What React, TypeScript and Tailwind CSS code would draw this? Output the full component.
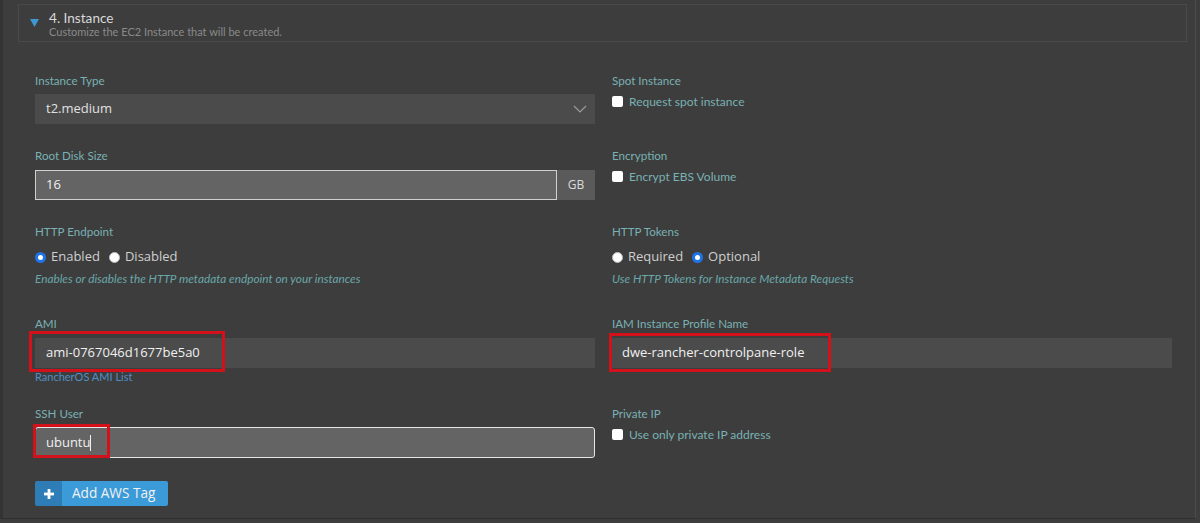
import React from "react";

const Label = ({ children }: { children: React.ReactNode }) => (
  <div className="text-[11.6px] leading-[14px] text-[#79b1b4] h-[14px]">{children}</div>
);

const Help = ({ children }: { children: React.ReactNode }) => (
  <div className="text-[11.8px] leading-[13px] italic text-[#6aa7a9] mt-[5px]">{children}</div>
);

const Radio = ({ checked, label }: { checked?: boolean; label: string }) => (
  <span className="inline-flex items-center gap-[5px] mr-[9px]">
    {checked ? (
      <span className="w-[11px] h-[11px] rounded-full border-[3px] border-[#1e74e6] bg-white box-border" />
    ) : (
      <span className="w-[11px] h-[11px] rounded-full bg-white border border-[#bbb] box-border" />
    )}
    <span className="text-[13px] text-[#cfcfcf] font-['Open_Sans',sans-serif]">{label}</span>
  </span>
);

const Checkbox = ({ label }: { label: string }) => (
  <div className="flex items-start gap-[6px] mt-[7px]">
    <span className="w-[11px] h-[11px] bg-white rounded-[2px] mt-[1px]" />
    <span className="text-[12px] leading-[14px] text-[#79b1b4]">{label}</span>
  </div>
);

export default function App() {
  return (
    <div className="w-[1200px] h-[523px] bg-[#3d3d3d] font-['Lato',sans-serif] overflow-hidden">
      <div className="h-[519px] border-l-[3px] border-r border-b border-l-[#333] border-r-[#4c4c4c] border-b-[#2f2f2f] mr-[4px]">
        {/* header */}
        <div className="ml-[15px] mr-[8px] pt-[4px]">
          <div className="h-[38px] border border-[#4a4a4a] flex items-start">
            <div className="pl-[11px] pt-[14px]">
              <svg width="9" height="8" viewBox="0 0 9 8">
                <polygon points="0,0 9,0 4.5,8" fill="#3d98d3" />
              </svg>
            </div>
            <div className="pl-[10px] pt-[5px]">
              <div className="text-[13.6px] leading-[16px] text-[#d8d8d8]">4. Instance</div>
              <div className="text-[11px] leading-[12px] text-[#8a8a8a]">Customize the EC2 Instance that will be created.</div>
            </div>
          </div>
        </div>

        <div className="pl-[32px] pr-[24px] pt-[32px]">
          <div className="grid grid-cols-[560px_560px] gap-x-[17px]">
            {/* Row 1 */}
            <div className="h-[75px]">
              <Label>Instance Type</Label>
              <div className="mt-[6px] h-[30px] bg-[#4b4b4b] flex items-center justify-between px-[11px]">
                <span className="text-[13px] text-[#e0e0e0] font-['Open_Sans',sans-serif]">t2.medium</span>
                <svg width="14" height="8" viewBox="0 0 14 8" className="mr-[-3px]">
                  <polyline points="1,1 7,7 13,1" fill="none" stroke="#9a9a9a" strokeWidth="1.2" />
                </svg>
              </div>
            </div>
            <div className="h-[75px]">
              <Label>Spot Instance</Label>
              <Checkbox label="Request spot instance" />
            </div>

            {/* Row 2 */}
            <div className="h-[76px]">
              <Label>Root Disk Size</Label>
              <div className="mt-[7px] h-[30px] flex">
                <div className="flex-1 bg-[#646464] border border-[#d0d0d0] flex items-center px-[10px]">
                  <span className="text-[13px] text-[#f0f0f0] font-['Open_Sans',sans-serif]">16</span>
                </div>
                <div className="w-[38px] bg-[#5a5a5a] flex items-center justify-center text-[12px] text-[#dcdcdc] font-['Open_Sans',sans-serif]">GB</div>
              </div>
            </div>
            <div className="h-[76px]">
              <Label>Encryption</Label>
              <Checkbox label="Encrypt EBS Volume" />
            </div>

            {/* Row 3 */}
            <div className="h-[92px]">
              <Label>HTTP Endpoint</Label>
              <div className="mt-[8px] flex items-center h-[20px]">
                <Radio checked label="Enabled" />
                <Radio label="Disabled" />
              </div>
              <Help>Enables or disables the HTTP metadata endpoint on your instances</Help>
            </div>
            <div className="h-[92px]">
              <Label>HTTP Tokens</Label>
              <div className="mt-[8px] flex items-center h-[20px]">
                <Radio label="Required" />
                <Radio checked label="Optional" />
              </div>
              <Help>Use HTTP Tokens for Instance Metadata Requests</Help>
            </div>

            {/* Row 4 */}
            <div className="h-[90px]">
              <Label>AMI</Label>
              <div className="relative mt-[7px] h-[30px] bg-[#4b4b4b] flex items-center px-[11px]">
                <span className="text-[13px] text-[#f0f0f0] font-['Open_Sans',sans-serif]">ami-0767046d1677be5a0</span>
                <div className="absolute left-[-6px] top-[-7px] w-[196px] h-[41px] border-[3px] border-[#d3111b]" />
              </div>
              <div className="text-[11px] leading-[13px] text-[#4f8fc4] mt-[2px]">RancherOS AMI List</div>
            </div>
            <div className="h-[90px]">
              <Label>IAM Instance Profile Name</Label>
              <div className="relative mt-[7px] h-[30px] bg-[#4b4b4b] flex items-center px-[10px]">
                <span className="text-[13px] text-[#f0f0f0] font-['Open_Sans',sans-serif]">dwe-rancher-controlpane-role</span>
                <div className="absolute left-[-3px] top-[-5px] w-[222px] h-[39px] border-[3px] border-[#d3111b]" />
              </div>
            </div>

            {/* Row 5 */}
            <div className="h-[74px]">
              <Label>SSH User</Label>
              <div className="relative mt-[6px] h-[31px] bg-[#646464] border border-[#e6e6e6] rounded-[3px] flex items-center px-[10px]">
                <span className="text-[13px] text-[#f0f0f0] font-['Open_Sans',sans-serif]">ubuntu</span>
                <span className="w-[1px] h-[16px] bg-[#f0f0f0]" />
                <div className="absolute left-[-3px] top-[-4px] w-[77px] h-[34px] border-[3px] border-[#d3111b]" />
              </div>
            </div>
            <div className="h-[74px]">
              <Label>Private IP</Label>
              <Checkbox label="Use only private IP address" />
            </div>
          </div>

          <div className="flex">
            <button className="flex h-[25px] rounded-[2px] overflow-hidden">
              <span className="w-[27px] bg-[#2f7db6] flex items-center justify-center">
                <svg width="10" height="10" viewBox="0 0 10 10">
                  <rect x="3.6" y="0" width="2.8" height="10" fill="#ffffff" />
                  <rect x="0" y="3.6" width="10" height="2.8" fill="#ffffff" />
                </svg>
              </span>
              <span className="bg-[#3b9ad8] pl-[10px] pr-[13px] flex items-center text-[13.6px] text-[#f2f2f2] font-['Open_Sans',sans-serif]">Add AWS Tag</span>
            </button>
          </div>
        </div>
      </div>
    </div>
  );
}
